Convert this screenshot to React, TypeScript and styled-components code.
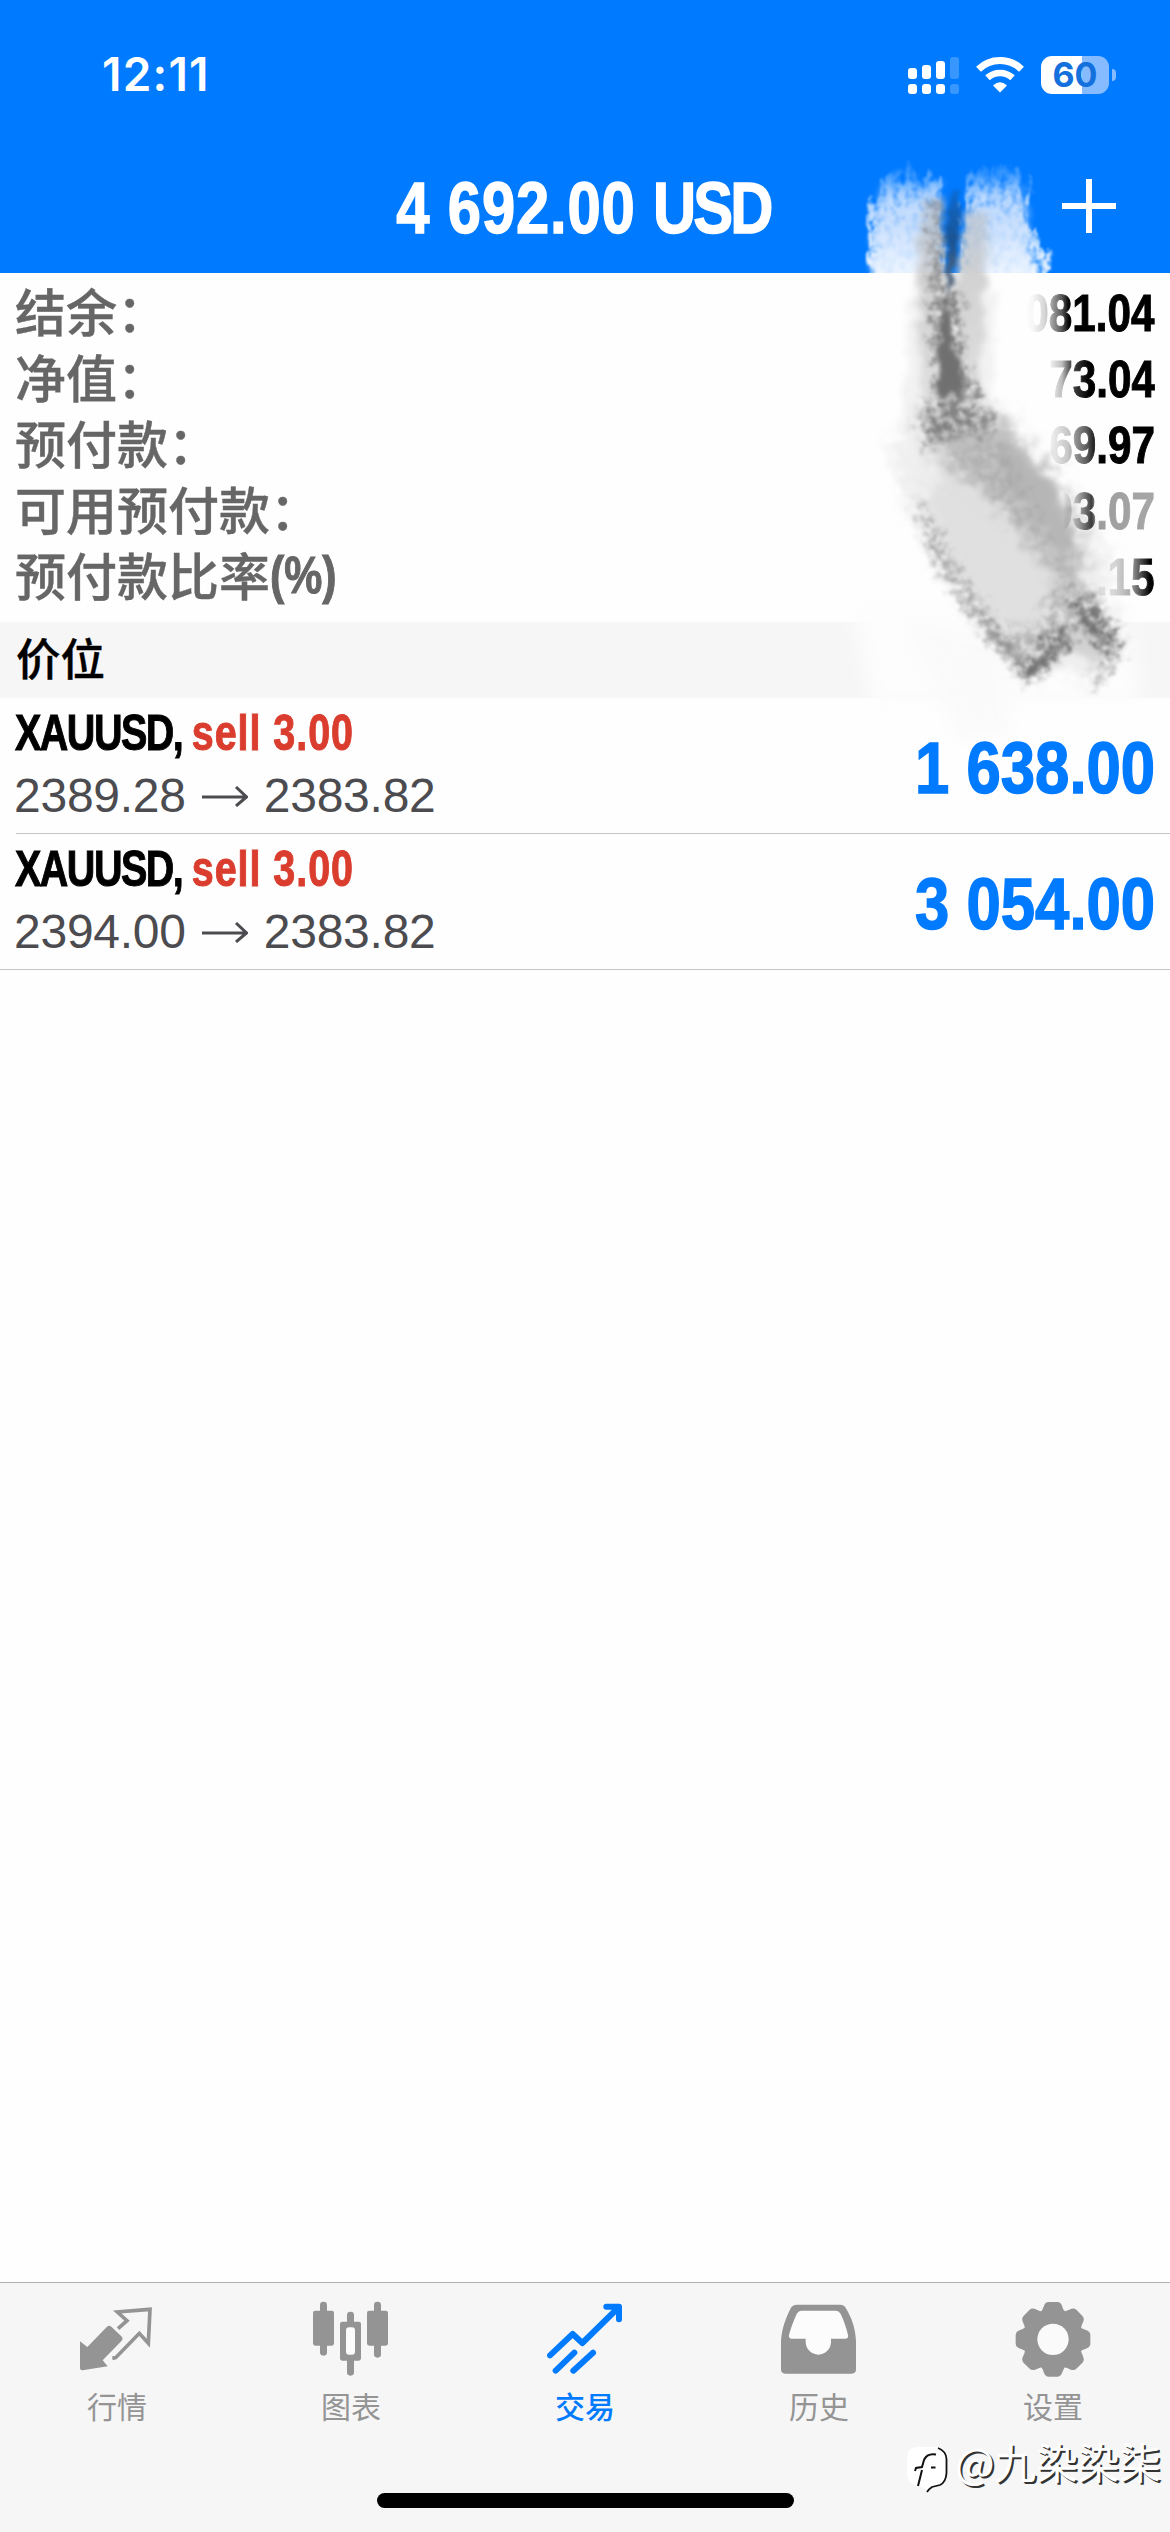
import React from "react";
import styled, { createGlobalStyle } from "styled-components";

const BLUE = "#007aff";
const GREY = "#949494";
const CN = '"Noto Sans CJK SC", sans-serif';
const LATIN = '"Liberation Sans", "Noto Sans CJK SC", sans-serif';

const GlobalStyle = createGlobalStyle`
  * { box-sizing: border-box; }
  body { margin: 0; background: #fff; font-family: ${LATIN}; }
`;

const Screen = styled.div`
  position: relative;
  width: 1170px;
  height: 2532px;
  display: flex;
  flex-direction: column;
  background: #fefefe;
  overflow: hidden;
`;

const Header = styled.header`
  height: 273px;
  flex: none;
  background: ${BLUE};
  color: #fff;
  display: flex;
  flex-direction: column;
`;

const StatusBar = styled.div`
  height: 149px;
  padding: 0 54px 0 102px;
  display: flex;
  justify-content: space-between;
  align-items: center;
`;

const Clock = styled.span`
  font: 600 46px/54px Inter, sans-serif;
  letter-spacing: 1.2px;
  margin-top: -2px;
`;

const StatusIcons = styled.div`
  display: flex;
  align-items: center;
  gap: 17px;
`;

const Battery = styled.div`
  display: flex;
  align-items: center;
  gap: 3px;
`;

const BatteryBody = styled.div`
  width: 68px;
  height: 38px;
  border-radius: 11px;
  background: linear-gradient(to right, #fff 60%, #86bcff 60%);
  color: #1470dc;
  font: 700 34px/38px Inter, sans-serif;
  text-align: center;
`;

const BatteryTip = styled.i`
  width: 4px;
  height: 12px;
  border-radius: 0 5px 5px 0;
  background: #86bcff;
`;

const NavBar = styled.div`
  flex: 1;
  display: grid;
  grid-template-columns: 200px 1fr 200px;
  align-items: start;
  padding-top: 18px;
`;

const AddButton = styled.button`
  grid-column: 3;
  justify-self: end;
  position: relative;
  z-index: 2;
  margin: 12px 54px 0 0;
  width: 54px;
  height: 54px;
  padding: 0;
  border: 0;
  background: none;
  display: block;
`;

type CondensedProps = { $size: number; $scale: number; $origin: string; $track?: number };
const Condensed = styled.span<CondensedProps>`
  display: inline-block;
  white-space: pre;
  font-family: ${LATIN};
  font-weight: 700;
  font-size: ${(p) => p.$size}px;
  letter-spacing: ${(p) => p.$track ?? 0}px;
  transform: scaleX(${(p) => p.$scale});
  transform-origin: ${(p) => p.$origin} center;
  -webkit-text-stroke: ${(p) => p.$size / 50}px currentColor;
`;

const Title = styled(Condensed)`
  grid-column: 2;
  justify-self: center;
  margin-left: -4px;
  line-height: 82px;
`;

const Currency = styled.span`
  letter-spacing: -3.5px;
`;

const Summary = styled.section`
  flex: none;
  height: 349px;
  padding: 7px 16px 0;
`;

const SummaryRow = styled.div`
  height: 66px;
  display: flex;
  justify-content: space-between;
  align-items: center;
`;

const Label = styled.span`
  display: flex;
  height: 60px;
  font: 500 51px/60px ${CN};
  color: #666;
  margin: -6px 0 0 -1px;
  -webkit-text-stroke: 0.4px currentColor;
`;

const Percent = styled(Condensed)`
  line-height: 64px;
`;

const Figure = styled(Condensed)<{ $ink: string }>`
  position: relative;
  z-index: 2;
  margin-right: -1px;
  line-height: 66px;
  color: transparent;
  background: linear-gradient(to right, ${(p) => p.$ink});
  -webkit-background-clip: text;
  background-clip: text;
`;

const SectionTitle = styled.h2`
  flex: none;
  height: 76px;
  margin: 0;
  padding: 0 16px;
  background: #f6f6f6;
  color: #000;
  font: 500 44.5px/70px ${CN};
  -webkit-text-stroke: 0.4px currentColor;
`;

const Position = styled.article<{ $inset: number }>`
  flex: none;
  height: 136px;
  padding: 0 15px 0 15px;
  display: flex;
  justify-content: space-between;
  background: linear-gradient(#c4c4c6, #c4c4c6) ${(p) => p.$inset}px 135px / 100% 1px no-repeat;
`;

const Deal = styled.div`
  display: flex;
  flex-direction: column;
`;

const Instrument = styled(Condensed)`
  height: 62px;
  line-height: 71px;
`;

const Side = styled.span`
  color: #da3d2e;
  letter-spacing: 1.2px;
`;

const Quote = styled.div`
  display: flex;
  align-items: center;
  gap: 16px;
  color: #4c4c50;
  font-size: 48px;
  line-height: 72px;
  letter-spacing: -0.25px;
  margin: 0 0 0 -1px;
`;

const Profit = styled(Condensed)`
  position: relative;
  z-index: 2;
  color: ${BLUE};
  line-height: 140px;
  height: 136px;
`;

const TabBar = styled.nav`
  position: relative;
  margin-top: auto;
  flex: none;
  height: 250px;
  border-top: 1px solid #b2b2b2;
  background: #f6f6f6;
  display: grid;
  grid-template-columns: repeat(5, 1fr);
`;

const Tab = styled.a<{ $active?: boolean }>`
  padding-top: 18px;
  display: flex;
  flex-direction: column;
  align-items: center;
  color: ${(p) => (p.$active ? BLUE : GREY)};
  font: ${(p) => (p.$active ? 500 : 400)} 30px/44px ${CN};
`;

const TabText = styled.span`
  margin-top: 6px;
`;

const HomeIndicator = styled.div`
  position: absolute;
  left: 377px;
  top: 210px;
  width: 417px;
  height: 15px;
  border-radius: 8px;
  background: #000;
`;

const Watermark = styled.div`
  position: absolute;
  right: 9px;
  bottom: 38px;
  height: 55px;
  display: flex;
  align-items: flex-start;
  gap: 5px;
  color: #fff;
  font: 400 41.6px/60px ${CN};
  text-shadow: 2px 1.5px 0.5px #333;

  svg {
    margin-top: 5px;
  }
`;

const WatermarkText = styled.span`
  margin-top: -8px;
  white-space: nowrap;
`;

const SmudgeLayer = styled.svg`
  position: absolute;
  left: 820px;
  top: 130px;
  z-index: 1;
  pointer-events: none;
`;

const Signal = () => (
  <svg width="51" height="38" viewBox="907 55 51 38" fill="#fff">
    {[67, 64, 60, 56].map((top, i) => (
      <g key={top} opacity={i === 3 ? 0.22 : 1}>
        <rect x={907 + i * 14} y={top} width="9" height={78 - top} rx="3" />
        <rect x={907 + i * 14} y="83" width="9" height="10" rx="3" />
      </g>
    ))}
  </svg>
);

const Wifi = () => (
  <svg width="48" height="38" viewBox="0 0 48 38" fill="none" stroke="#fff">
    <path d="M2.5 13.2A31 31 0 0 1 45.5 13.2" strokeWidth="7" />
    <path d="M11.5 21.8A18.5 18.5 0 0 1 36.5 21.8" strokeWidth="6.6" />
    <path d="M24 36.5L17 29.6Q24 23 31 29.6Z" fill="#fff" stroke="none" />
  </svg>
);

const Plus = () => (
  <svg width="54" height="54" viewBox="0 0 54 54" stroke="#fff" strokeWidth="6">
    <path d="M27 0V54M0 27H54" />
  </svg>
);

const Arrow = () => (
  <svg width="46" height="22" viewBox="0 0 46 22" fill="none" stroke="currentColor" strokeWidth="3">
    <path d="M0 12H44M34 2L44.5 12L34 21" />
  </svg>
);

const QuotesIcon = () => (
  <svg width="76" height="76" viewBox="237 94 228 228">
    <path
      d="M240 215L262 232L321 171Q327 165 334 171L364 200Q371 207 365 213L308 272L323 290L248 302Q240 303 240 295Z"
      fill="currentColor"
    />
    <path d="M354 177L381 153L352 127L450 119L445 221L418 191L347 264L337 266" fill="none" stroke="currentColor" strokeWidth="11" />
  </svg>
);

const ChartIcon = () => (
  <svg width="76" height="76" viewBox="939 94 228 228" fill="currentColor">
    <rect x="939" y="123" width="63" height="105" rx="7" />
    <rect x="960" y="96" width="21" height="162" rx="10" />
    <rect x="1101" y="123" width="63" height="105" rx="7" />
    <rect x="1122" y="96" width="21" height="168" rx="10" />
    <rect x="1041" y="126" width="21" height="50" rx="10" />
    <rect x="1041" y="262" width="21" height="56" rx="10" />
    <rect x="1020" y="156" width="63" height="117" rx="7" />
    <rect x="1038" y="173" width="27" height="82" rx="9" fill="#fcfcfc" />
  </svg>
);

const TradeIcon = () => (
  <svg
    width="76"
    height="76"
    viewBox="321 94 228 228"
    fill="none"
    stroke="currentColor"
    strokeWidth="18"
    strokeLinecap="round"
    strokeLinejoin="round"
  >
    <path d="M330 257L398 193L427 220L534 115M499 111H537V149" />
    <path d="M347 303L403 249M400 303L459 249" />
  </svg>
);

const HistoryIcon = () => (
  <svg width="76" height="76" viewBox="1023 94 228 228">
    <path
      fill="currentColor"
      d="M1023 215C1025 175 1040 138 1054 113Q1059 105 1071 105H1200Q1212 105 1217 114C1236 146 1247 178 1248 215V299Q1248 312 1235 312H1036Q1023 312 1023 299Z"
    />
    <path
      fill="#fcfcfc"
      d="M1047 196C1053 172 1062 151 1070 133Q1075 123 1086 123H1186Q1197 123 1202 133C1211 151 1219 175 1224 196Q1226 207 1216 207H1173V216A38 39 0 0 1 1097 216V207H1056Q1045 207 1047 196Z"
    />
  </svg>
);

const GearIcon = () => {
  const point = (x: number, y: number, turn: number) => {
    const angle = (turn * Math.PI) / 4;
    const px = x * Math.cos(angle) - y * Math.sin(angle);
    const py = x * Math.sin(angle) + y * Math.cos(angle);
    return `${px.toFixed(1)} ${py.toFixed(1)}`;
  };
  const teeth = Array.from({ length: 8 }, (_, i) =>
    [
      `${i ? "L" : "M"}${point(-26, -98, i)}`,
      `Q${point(-22, -110, i)} ${point(-13, -110, i)}`,
      `L${point(13, -110, i)}`,
      `Q${point(22, -110, i)} ${point(26, -98, i)}`,
      `Q${point(30, -84, i)} ${point(36, -82, i)}`,
    ].join("")
  ).join("");
  return (
    <svg width="76" height="76" viewBox="-114 -115 228 228">
      <path d={`${teeth}Z`} fill="currentColor" stroke="currentColor" strokeWidth="4" />
      <circle r="47" fill="#fafafa" />
    </svg>
  );
};

const WatermarkLogo = () => (
  <svg width="44" height="50" viewBox="0 0 44 50">
    <path d="M12 3H30Q41 3 41 14V31Q41 41 30 43Q25 44 21 48Q20 43 12 42Q1 40 1 29V14Q1 3 12 3Z" fill="#fff" />
    <path d="M32 4Q40 7 40.500 15V29Q40 38 34 41L26 43Q23 45 21 48" fill="none" stroke="#111" strokeWidth="1.8" />
    <path d="M12 42L16 26M9 27L10 24L16 23L18 16Q21 9 30 10.500M25 23.500H29.500" fill="none" stroke="#111" strokeWidth="2" />
  </svg>
);

const Smudge = () => (
  <SmudgeLayer width="350" height="620" viewBox="820 130 350 620">
    <defs>
      <filter id="bristle" x="-30%" y="-20%" width="160%" height="140%" colorInterpolationFilters="sRGB">
        <feTurbulence type="fractalNoise" baseFrequency="0.15 0.03" numOctaves="3" seed="4" result="n" />
        <feDisplacementMap in="SourceGraphic" in2="n" scale="26" xChannelSelector="B" yChannelSelector="R" result="d" />
        <feTurbulence type="fractalNoise" baseFrequency="0.16 0.12" numOctaves="3" seed="9" />
        <feColorMatrix values="0 0 0 0 1  0 0 0 0 1  0 0 0 0 1  3 0 0 0 -0.75" result="g" />
        <feComposite in="d" in2="g" operator="in" />
        <feGaussianBlur stdDeviation="1.3" />
      </filter>
      <filter id="rough" x="-30%" y="-30%" width="160%" height="160%" colorInterpolationFilters="sRGB">
        <feTurbulence type="fractalNoise" baseFrequency="0.09" numOctaves="4" seed="12" result="n" />
        <feDisplacementMap in="SourceGraphic" in2="n" scale="20" xChannelSelector="R" yChannelSelector="G" result="d" />
        <feGaussianBlur in="d" stdDeviation="3.4" />
      </filter>
      <filter id="blend" x="-30%" y="-30%" width="160%" height="160%" colorInterpolationFilters="sRGB">
        <feGaussianBlur in="SourceGraphic" stdDeviation="7" result="s" />
        <feTurbulence type="fractalNoise" baseFrequency="0.07" numOctaves="4" seed="31" result="n" />
        <feDisplacementMap in="s" in2="n" scale="34" xChannelSelector="R" yChannelSelector="G" result="d" />
        <feGaussianBlur in="d" stdDeviation="1.6" />
      </filter>
      <filter id="core" x="-60%" y="-20%" width="220%" height="140%" colorInterpolationFilters="sRGB">
        <feTurbulence type="fractalNoise" baseFrequency="0.09" numOctaves="3" seed="5" result="n" />
        <feDisplacementMap in="SourceGraphic" in2="n" scale="11" xChannelSelector="R" yChannelSelector="G" result="d" />
        <feGaussianBlur in="d" stdDeviation="1.9" />
      </filter>
      <filter id="grain" x="-30%" y="-30%" width="160%" height="160%" colorInterpolationFilters="sRGB">
        <feGaussianBlur in="SourceGraphic" stdDeviation="4" result="s" />
        <feTurbulence type="fractalNoise" baseFrequency="0.11" numOctaves="4" seed="21" result="n" />
        <feDisplacementMap in="s" in2="n" scale="24" xChannelSelector="R" yChannelSelector="G" result="d" />
        <feTurbulence type="fractalNoise" baseFrequency="0.12" numOctaves="3" seed="7" />
        <feColorMatrix values="0 0 0 0 0  0 0 0 0 0  0 0 0 0 0  2.8 0 0 0 -0.8" result="g" />
        <feComposite in="d" in2="g" operator="in" />
        <feGaussianBlur stdDeviation="1.3" />
      </filter>
      <filter id="soft" x="-40%" y="-40%" width="180%" height="180%">
        <feGaussianBlur stdDeviation="9" />
      </filter>
      <linearGradient id="fade" x1="0" y1="164" x2="0" y2="273" gradientUnits="userSpaceOnUse">
        <stop offset="0" stopColor="#fff" stopOpacity="0.06" />
        <stop offset="0.35" stopColor="#fff" stopOpacity="0.7" />
        <stop offset="1" stopColor="#fff" stopOpacity="0.92" />
      </linearGradient>
      <linearGradient id="veil" x1="0" y1="185" x2="0" y2="273" gradientUnits="userSpaceOnUse">
        <stop offset="0" stopColor="#c4dcfc" stopOpacity="0.3" />
        <stop offset="0.4" stopColor="#c8defc" stopOpacity="0.85" />
        <stop offset="1" stopColor="#ecf4ff" stopOpacity="0.95" />
      </linearGradient>
      <linearGradient id="spike" x1="0" y1="185" x2="0" y2="300" gradientUnits="userSpaceOnUse">
        <stop offset="0" stopColor="#175ba8" stopOpacity="0.5" />
        <stop offset="0.5" stopColor="#1b528f" />
        <stop offset="0.75" stopColor="#45607f" />
        <stop offset="1" stopColor="#828282" />
      </linearGradient>
      <linearGradient id="greyWash" x1="0" y1="195" x2="0" y2="420" gradientUnits="userSpaceOnUse">
        <stop offset="0" stopColor="#b4bac2" stopOpacity="0.5" />
        <stop offset="0.35" stopColor="#c6c6c6" stopOpacity="0.8" />
        <stop offset="1" stopColor="#dadada" stopOpacity="0.8" />
      </linearGradient>
      <clipPath id="headerArea">
        <rect x="820" y="130" width="350" height="143" />
      </clipPath>
      <clipPath id="bodyArea">
        <rect x="820" y="273" width="350" height="477" />
      </clipPath>
    </defs>

    <g clipPath="url(#bodyArea)">
      <path d="M852 605L1130 605L1140 706H872Z" fill="#fdfdfd" filter="url(#soft)" />
      <path d="M905 620L1000 640L1010 735L960 740Z" fill="#fafafa" filter="url(#soft)" />
    </g>

    <g clipPath="url(#headerArea)">
      <path d="M880 176L905 166L938 180L942 200V300H866L872 205Z" fill="url(#fade)" filter="url(#bristle)" />
      <path d="M880 186H940V300H870Z" fill="url(#veil)" filter="url(#rough)" />
      <path d="M972 172L1000 162L1026 176L1030 225L1050 262V300H962V200Z" fill="url(#fade)" filter="url(#bristle)" />
      <path d="M972 186H1022L1030 245L1040 300H962Z" fill="url(#veil)" filter="url(#rough)" />
    </g>

    <g filter="url(#rough)">
      <path d="M924 198H944L944 300L942 400L922 400L914 330L916 270Z" fill="url(#greyWash)" />
      <path d="M964 212H988L986 300L980 405H954L954 290Z" fill="url(#greyWash)" />
      <path d="M910 290H918L922 440L902 430Z" fill="#f2f2f2" />
      <path d="M986 290H996L992 400H978Z" fill="#f2f2f2" />
    </g>
    <g filter="url(#grain)">
      <path d="M930 200H944L944 300L940 360H930Z" fill="#666" opacity="0.6" />
      <path d="M938 290L960 292L962 362L985 400L972 420L926 418L922 408L938 395Z" fill="#666" opacity="0.75" />
    </g>
    <path d="M953 190L957 190L960 225L955 270L951 302H948L946 225Z" fill="url(#spike)" filter="url(#core)" />
    <path d="M943 298L949 300L952 345L960 362L964 398L952 408L937 402L938 355Z" fill="#707070" filter="url(#core)" />

    <path
      d="M890 446L925 402L1000 404L1078 496L1112 560L1106 590L1126 640L1090 686L1066 664L1036 680L1018 672L962 603L933 557L904 500Z"
      fill="#efefef"
      filter="url(#blend)"
    />
    <path
      d="M915 425L940 402L990 412L1056 477L1082 545L1088 592L1070 640L1036 672L1020 664L968 596L939 548L925 505L938 470Z"
      fill="#e0e0e0"
      filter="url(#blend)"
    />
    <path
      d="M922 416L950 402L987 412L1052 482L1078 530L1078 596L1062 590L1040 552L1000 508L956 474Z"
      fill="#b4b4b4"
      opacity="0.7"
      filter="url(#blend)"
    />
    <path d="M994 440L1012 444L1050 486L1070 530L1068 560L1052 540L1034 512L1006 476Z" fill="#b5b5b5" opacity="0.9" filter="url(#rough)" />
    <path d="M1082 596L1116 640L1092 668L1068 640Z" fill="#d2d2d2" filter="url(#rough)" />

    <g filter="url(#grain)" fill="#666">
      <path d="M918 414L940 398L992 410L990 436L960 434L930 452Z" opacity="0.7" />
      <path d="M914 500L920 504L972 590L1024 654L1030 676L1016 674L964 607L932 558Z" opacity="0.5" />
      <path d="M1018 668L1050 632L1078 618L1072 644L1044 674L1022 684Z" opacity="0.85" />
      <path d="M1068 602L1090 590L1124 640L1108 662L1092 642Z" opacity="0.85" />
      <path d="M1040 610L1062 575L1085 592L1060 640L1040 645Z" opacity="0.35" />
      <path d="M1000 630L1030 625L1046 640L1030 660Z" opacity="0.3" />
      <path d="M1090 676L1112 650L1124 652L1096 690Z" opacity="0.45" />
      <path d="M940 450L1000 440L1060 560L1080 540L1076 580L1040 560L980 480Z" opacity="0.16" />
    </g>
    <path d="M1076 606L1082 608L1106 640L1102 644L1090 632Z" fill="#707070" opacity="0.7" filter="url(#core)" />
    <path d="M1024 672L1068 632L1072 636L1034 676Z" fill="#707070" opacity="0.6" filter="url(#core)" />
    <path d="M990 626L1024 660L1020 666L986 632Z" fill="#808080" opacity="0.6" filter="url(#core)" />
  </SmudgeLayer>
);

const ink = (alpha: number, at: number) => `rgba(0,0,0,${alpha}) ${at}%`;

const summary = [
  { label: "结余：", value: "081.04", ink: [ink(0, 0), ink(0.03, 6), ink(0.16, 15), ink(0.35, 20), ink(0.65, 28), ink(1, 34)] },
  { label: "净值：", value: "73.04", ink: [ink(0.04, 0), ink(0.25, 12), ink(0.7, 20), ink(1, 38)] },
  { label: "预付款：", value: "69.97", ink: [ink(0.04, 0), ink(0.22, 18), ink(0.4, 24), ink(0.65, 36), ink(1, 46)] },
  {
    label: "可用预付款：",
    value: "93.07",
    ink: [ink(0, 0), ink(0, 13), ink(0.14, 18), ink(0.2, 24), ink(0.75, 40), ink(0.38, 46), ink(0.34, 100)],
  },
  { label: "预付款比率", unit: "(%)", value: ".15", ink: [ink(0.06, 0), ink(0.1, 15), ink(0.14, 30), ink(0.32, 58), ink(0.5, 66), ink(1, 92)] },
];

const positions = [
  { open: "2389.28", now: "2383.82", profit: "1 638.00", inset: 16 },
  { open: "2394.00", now: "2383.82", profit: "3 054.00", inset: 0 },
];

const tabs = [
  { name: "行情", Icon: QuotesIcon },
  { name: "图表", Icon: ChartIcon },
  { name: "交易", Icon: TradeIcon, active: true },
  { name: "历史", Icon: HistoryIcon },
  { name: "设置", Icon: GearIcon },
];

export default function App() {
  return (
    <Screen>
      <GlobalStyle />
      <Header>
        <StatusBar>
          <Clock>12:11</Clock>
          <StatusIcons>
            <Signal />
            <Wifi />
            <Battery>
              <BatteryBody>60</BatteryBody>
              <BatteryTip />
            </Battery>
          </StatusIcons>
        </StatusBar>
        <NavBar>
          <Title $size={72} $scale={0.83} $origin="center" $track={1}>
            4 692.00 <Currency>USD</Currency>
          </Title>
          <AddButton aria-label="add">
            <Plus />
          </AddButton>
        </NavBar>
      </Header>

      <Summary>
        {summary.map((row) => (
          <SummaryRow key={row.label}>
            <Label>
              {row.label}
              {row.unit && (
                <Percent $size={51} $scale={0.84} $origin="left">
                  {row.unit}
                </Percent>
              )}
            </Label>
            <Figure $size={51.5} $scale={0.82} $origin="right" $ink={row.ink.join(", ")}>
              {row.value}
            </Figure>
          </SummaryRow>
        ))}
      </Summary>

      <SectionTitle>价位</SectionTitle>

      {positions.map((p) => (
        <Position key={p.open} $inset={p.inset}>
          <Deal>
            <Instrument $size={50} $scale={0.79} $origin="left" $track={-1.9}>
              XAUUSD, <Side>sell 3.00</Side>
            </Instrument>
            <Quote>
              {p.open}
              <Arrow />
              {p.now}
            </Quote>
          </Deal>
          <Profit $size={73} $scale={0.845} $origin="right">
            {p.profit}
          </Profit>
        </Position>
      ))}

      <TabBar>
        {tabs.map(({ name, Icon, active }) => (
          <Tab key={name} $active={active}>
            <Icon />
            <TabText>{name}</TabText>
          </Tab>
        ))}
        <HomeIndicator />
      </TabBar>

      <Watermark>
        <WatermarkLogo />
        <WatermarkText>@九染染柒</WatermarkText>
      </Watermark>
      <Smudge />
    </Screen>
  );
}
